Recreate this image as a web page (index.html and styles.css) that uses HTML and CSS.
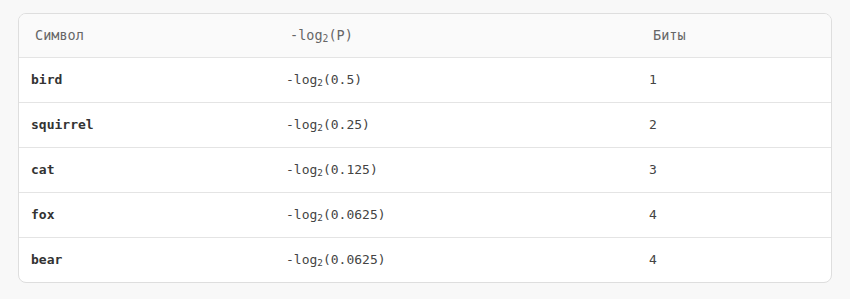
FILE: index.html
```html
<!DOCTYPE html>
<html>
<head>
    <meta charset="utf-8">
    <title>Биты</title>
    <link rel="stylesheet" href="styles.css">
</head>
<body>
    <div class="table_wrap">
        <table class="bits_table">
            <thead>
                <tr>
                    <th class="col_symbol">Символ</th>
                    <th class="col_log">-log<sub>2</sub>(P)</th>
                    <th class="col_bits">Биты</th>
                </tr>
            </thead>
            <tbody>
                <tr>
                    <td class="symbol">bird</td>
                    <td>-log<sub>2</sub>(0.5)</td>
                    <td>1</td>
                </tr>
                <tr>
                    <td class="symbol">squirrel</td>
                    <td>-log<sub>2</sub>(0.25)</td>
                    <td>2</td>
                </tr>
                <tr>
                    <td class="symbol">cat</td>
                    <td>-log<sub>2</sub>(0.125)</td>
                    <td>3</td>
                </tr>
                <tr>
                    <td class="symbol">fox</td>
                    <td>-log<sub>2</sub>(0.0625)</td>
                    <td>4</td>
                </tr>
                <tr>
                    <td class="symbol">bear</td>
                    <td>-log<sub>2</sub>(0.0625)</td>
                    <td>4</td>
                </tr>
            </tbody>
        </table>
    </div>
</body>
</html>
```

FILE: styles.css
```css
body {
    margin: 0;
    padding: 13px 18px;
    background: #f8f8f8;
    font-family: "DejaVu Sans Mono", "Liberation Mono", monospace;
}

.table_wrap {
    background: #fff;
    border: 1px solid #dedede;
    border-radius: 8px;
    overflow: hidden;
}

.bits_table {
    width: 100%;
    border-collapse: collapse;
    table-layout: fixed;
}

.bits_table th,
.bits_table td {
    box-sizing: border-box;
}

.bits_table .col_symbol {
    width: 255px;
}

.bits_table .col_log {
    width: 363px;
}

.bits_table th {
    height: 43px;
    padding: 0 16px;
    text-align: left;
    font-size: 13.5px;
    font-weight: normal;
    color: #666;
    background: #fafafa;
    border-bottom: 1px solid #e4e4e4;
}

.bits_table td {
    height: 45px;
    padding: 0 12px;
    font-size: 13px;
    color: #444;
    border-bottom: 1px solid #e4e4e4;
}

.bits_table tbody tr:last-child td {
    border-bottom: none;
}

.bits_table td.symbol {
    font-weight: bold;
    color: #333;
}

.bits_table sub {
    font-size: 0.72em;
    line-height: 0;
    vertical-align: -0.25em;
}
```
